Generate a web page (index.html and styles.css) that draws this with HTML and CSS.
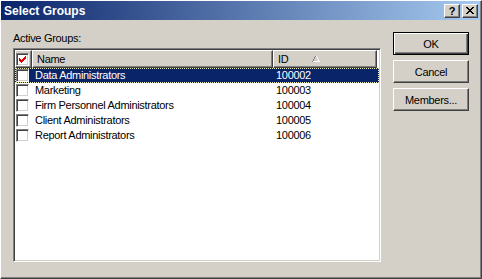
FILE: index.html
```html
<!DOCTYPE html>
<html lang="en">
<head>
    <meta charset="UTF-8">
    <title>Select Groups</title>
    <link rel="stylesheet" href="styles.css">
</head>
<body>

    <div class="window">
        <div class="titlebar">
            <span class="title">Select Groups</span>
            <div class="title-buttons">
                <div class="tbtn help">?</div>
                <div class="tbtn">
                    <svg width="8" height="7" viewBox="0 0 8 7" shape-rendering="crispEdges">
                        <path d="M0 0h2v1h-2zM6 0h2v1h-2zM1 1h2v1h-2zM5 1h2v1h-2zM2 2h4v1h-4zM3 3h2v1h-2zM2 4h4v1h-4zM1 5h2v1h-2zM5 5h2v1h-2zM0 6h2v1h-2zM6 6h2v1h-2z" fill="#000"/>
                    </svg>
                </div>
            </div>
        </div>

        <div class="content">
            <div class="left-pane">
                <div class="label">Active Groups:</div>
                <div class="list">
                    <div class="list-header">
                        <div class="hcell check-col">
                            <span class="checkbox checked">
                                <svg width="7" height="7" viewBox="0 0 7 7" shape-rendering="crispEdges">
                                    <path d="M6 0h1v1h-1zM5 1h2v1h-2zM0 2h1v1h-1zM4 2h3v1h-3zM0 3h2v1h-2zM3 3h3v1h-3zM0 4h5v1h-5zM1 5h3v1h-3zM2 6h1v1h-1z" fill="#e00000"/>
                                </svg>
                            </span>
                        </div>
                        <div class="hcell">Name</div>
                        <div class="hcell">ID <span class="sort">
                            <svg width="8" height="6" viewBox="0 0 8 6" shape-rendering="crispEdges">
                                <path d="M3 0h1v1h-1zM2 1h1v2h-1zM1 3h1v2h-1zM0 5h1v1h-1z" fill="#808080"/>
                                <path d="M4 0h1v1h-1zM5 1h1v2h-1zM6 3h1v2h-1zM1 5h7v1h-7z" fill="#fff"/>
                            </svg>
                        </span></div>
                    </div>

                    <div class="row selected">
                        <div class="cell"><span class="checkbox"></span></div>
                        <div class="cell">Data Administrators</div>
                        <div class="cell">100002</div>
                    </div>
                    <div class="row">
                        <div class="cell"><span class="checkbox"></span></div>
                        <div class="cell">Marketing</div>
                        <div class="cell">100003</div>
                    </div>
                    <div class="row">
                        <div class="cell"><span class="checkbox"></span></div>
                        <div class="cell">Firm Personnel Administrators</div>
                        <div class="cell">100004</div>
                    </div>
                    <div class="row">
                        <div class="cell"><span class="checkbox"></span></div>
                        <div class="cell">Client Administrators</div>
                        <div class="cell">100005</div>
                    </div>
                    <div class="row">
                        <div class="cell"><span class="checkbox"></span></div>
                        <div class="cell">Report Administrators</div>
                        <div class="cell">100006</div>
                    </div>
                </div>
            </div>

            <div class="button-column">
                <button class="btn default">OK</button>
                <button class="btn">Cancel</button>
                <button class="btn">Members...</button>
            </div>
        </div>
    </div>

</body>
</html>
```

FILE: styles.css
```css
* {
    box-sizing: border-box;
}
body {
    margin: 0;
    font-family: "Liberation Sans", Arial, sans-serif;
    font-size: 11px;
    letter-spacing: -0.3px;
    color: #000;
    background-color: #d4d0c8;
}
.window {
    width: 482px;
    height: 279px;
    background-color: #d4d0c8;
    border-top: 1px solid #fff;
    border-left: 1px solid #fff;
    border-right: 1px solid #404040;
    border-bottom: 1px solid #404040;
    box-shadow: inset -1px -1px #808080;
}
.titlebar {
    height: 19px;
    margin-right: 1px;
    background: linear-gradient(to right, #0a246a, #a6caf0);
    display: flex;
    align-items: center;
    justify-content: space-between;
    padding: 0 2px 0 3px;
}
.title {
    color: #fff;
    font-weight: bold;
    font-size: 12px;
    letter-spacing: 0;
}
.title-buttons {
    display: flex;
    gap: 2px;
}
.tbtn {
    width: 16px;
    height: 14px;
    background-color: #d4d0c8;
    border-top: 1px solid #fff;
    border-left: 1px solid #fff;
    border-right: 1px solid #404040;
    border-bottom: 1px solid #404040;
    box-shadow: inset -1px -1px #808080;
    display: flex;
    align-items: center;
    justify-content: center;
    font-weight: bold;
    font-size: 11px;
    line-height: 12px;
}
.content {
    display: flex;
    gap: 12px;
    padding: 12px 0 0 12px;
}
.left-pane {
    width: 368px;
}
.label {
    line-height: 13px;
    margin-bottom: 3px;
}
.list {
    height: 214px;
    background-color: #fff;
    border: 1px solid;
    border-color: #808080 #fff #fff #808080;
    box-shadow: inset 1px 1px #404040, inset -1px -1px #d4d0c8;
    padding: 1px;
}
.list-header,
.row {
    display: grid;
    grid-template-columns: 17px 241px 104px;
}
.list-header {
    height: 18px;
}
.hcell {
    background-color: #d4d0c8;
    border-top: 1px solid #fff;
    border-left: 1px solid #fff;
    border-right: 1px solid #404040;
    border-bottom: 1px solid #404040;
    box-shadow: inset -1px -1px #808080;
    padding-left: 4px;
    line-height: 15px;
    display: flex;
    align-items: center;
}
.check-col {
    padding-left: 0;
}
.sort {
    margin-left: 24px;
    display: flex;
}
.checkbox {
    width: 13px;
    height: 13px;
    background-color: #fff;
    border: 1px solid;
    border-color: #808080 #fff #fff #808080;
    box-shadow: inset 1px 1px #404040, inset -1px -1px #d4d0c8;
    display: flex;
    align-items: center;
    justify-content: center;
}
.row {
    height: 15px;
    line-height: 15px;
}
.row .cell:first-child {
    padding: 1px 0 0 1px;
}
.row .cell:nth-child(2) {
    padding-left: 3px;
}
.row .cell:nth-child(3) {
    padding-left: 3px;
}
.row.selected {
    background-color: #0a246a;
    color: #fff;
    outline: 1px dotted #f0f0b0;
    outline-offset: -1px;
}
.button-column {
    display: flex;
    flex-direction: column;
    gap: 5px;
}
.btn {
    width: 76px;
    height: 23px;
    font-family: "Liberation Sans", Arial, sans-serif;
    font-size: 11px;
    letter-spacing: -0.3px;
    color: #000;
    background-color: #d4d0c8;
    border-top: 1px solid #fff;
    border-left: 1px solid #fff;
    border-right: 1px solid #404040;
    border-bottom: 1px solid #404040;
    box-shadow: inset -1px -1px #808080;
    padding: 0;
    margin: 0;
}
.btn.default {
    border: 1px solid #000;
    box-shadow: inset 1px 1px #fff, inset -1px -1px #404040, inset -2px -2px #808080;
}
```
